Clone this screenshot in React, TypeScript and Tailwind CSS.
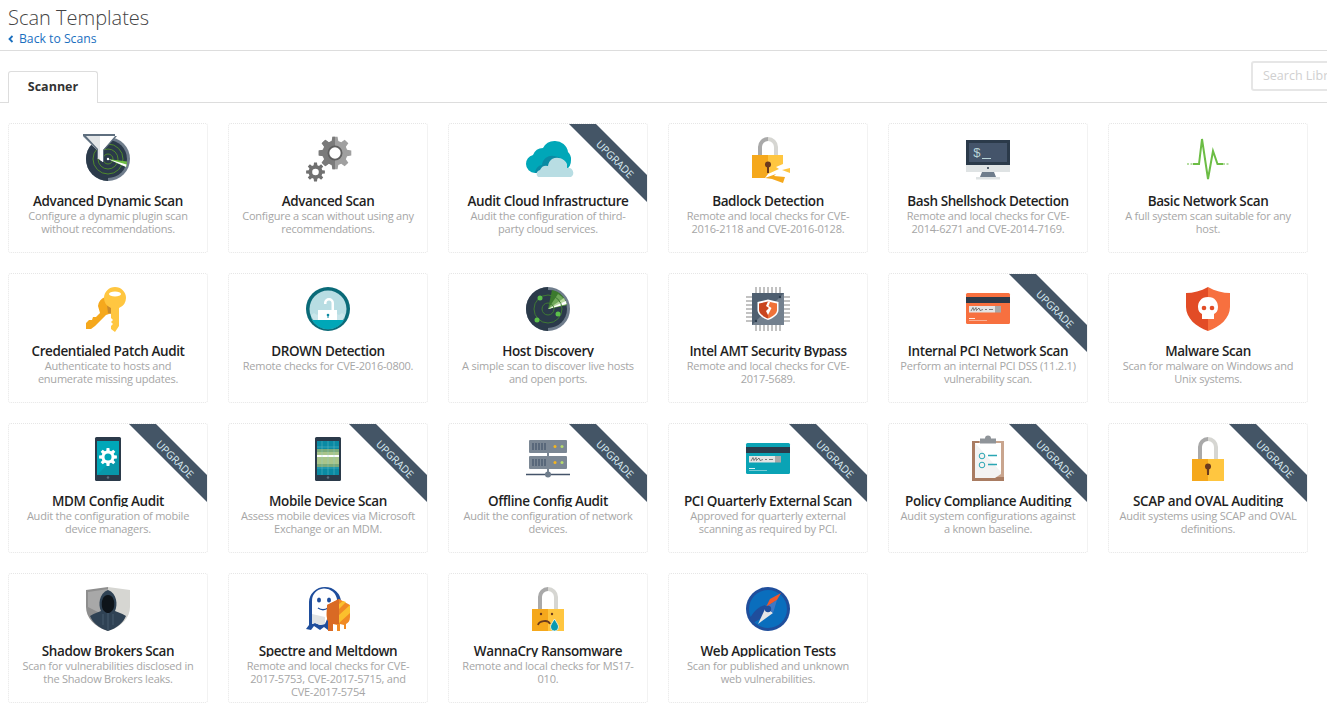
import React from "react";

const gear = (cx: number, cy: number, ro: number, ri: number, n: number) => {
  let d = "";
  const step = (Math.PI * 2) / n;
  for (let i = 0; i < n; i++) {
    const a = i * step - Math.PI / 2;
    const pts: [number, number][] = [
      [ri, a - step * 0.34],
      [ro, a - step * 0.2],
      [ro, a + step * 0.2],
      [ri, a + step * 0.34],
    ];
    pts.forEach(([r, t], j) => {
      d += `${i === 0 && j === 0 ? "M" : "L"}${(cx + r * Math.cos(t)).toFixed(2)} ${(cy + r * Math.sin(t)).toFixed(2)} `;
    });
  }
  return d + "Z";
};

const LockBody = ({ y = 22, h = 22 }: { y?: number; h?: number }) => (
  <>
    <rect x="6" y={y} width="16" height={h} fill="#f5a81c" />
    <rect x="22" y={y} width="16" height={h} fill="#ffc640" />
  </>
);

const Shackle = ({ h = 23 }: { h?: number }) => (
  <>
    <path d={`M12 ${h}V10A10 10 0 0 1 22 0V4A6 6 0 0 0 16 10V${h}Z`} fill="#a9a9a9" />
    <path d={`M32 ${h}V10A10 10 0 0 0 22 0V4A6 6 0 0 1 28 10V${h}Z`} fill="#d6d6d2" />
  </>
);

const CreditCard = ({ c }: { c: string }) => (
  <>
    <rect x="0" y="6" width="44" height="31" rx="1.5" fill={c} />
    <rect x="0" y="10" width="44" height="6" fill="#2b3a4a" />
    <rect x="3" y="19" width="26" height="6.5" fill="#e4e4e4" />
    <path d="M5 24 7 20.5 8 23.5 10 20.5 10.5 23.5 13 21 14 23.5 17 22.5M19 22.5H21M23 22.5H27" stroke="#333" strokeWidth=".6" fill="none" />
    <rect x="29" y="19" width="6" height="6.5" fill="#a8a8a8" />
    <rect x="3" y="31" width="6" height="1" fill="#fff" opacity=".85" />
    <rect x="3" y="33" width="18" height=".8" fill="#fff" opacity=".55" />
  </>
);

const Phone = ({ children }: { children: React.ReactNode }) => (
  <>
    <rect x="9" y="0" width="26" height="44" rx="1.5" fill="#2b3a4a" />
    {children}
    <circle cx="22" cy="40.5" r="1.2" fill="#5f6f7f" />
  </>
);

const icons: Record<string, React.ReactNode> = {
  dynamic: (
    <>
      <circle cx="22" cy="22" r="22" fill="#6f7d8c" />
      <path d="M22 0A22 22 0 0 0 22 44Z" fill="#2b3a4a" />
      <circle cx="22" cy="22" r="19" fill="#2b3a4a" />
      <g fill="none" stroke="#4f8a2d" strokeWidth="1">
        <circle cx="22" cy="22" r="15" />
        <circle cx="22" cy="22" r="10" />
        <circle cx="22" cy="22" r="5" />
      </g>
      <path d="M22 22 41 24.5 40.5 30Z" fill="#6fbe44" />
      <path d="M22 22 40.5 27.5 40 30Z" fill="#fff" />
      <circle cx="22" cy="22" r="1.2" fill="#fff" />
      <path d="M-3-3H29V0L17 13V25L11 21V13L-3 0Z" fill="#e3e6e8" />
      <path d="M14-3H29V0L17 13V25L14 23Z" fill="#fff" />
      <path d="M-3-3H29V-1H-3Z" fill="#5f6f7f" />
      <path d="M-3-1 11 13V21L12 21.8V12L0-1Z" fill="#5f6f7f" />
      <path d="M29-1 17 13V25L18 25V13.5L31-1Z" fill="#5f6f7f" />
    </>
  ),
  gears: (
    <>
      <defs>
        <clipPath id="gear-left">
          <rect x="0" y="-2" width="29" height="36" />
        </clipPath>
      </defs>
      <path d={gear(29, 16, 16.5, 12.5, 8)} fill="#a0a0a0" />
      <path d={gear(29, 16, 16.5, 12.5, 8)} fill="#7a7a7a" clipPath="url(#gear-left)" />
      <circle cx="29" cy="16" r="7.5" fill="#5f5f5f" />
      <circle cx="29" cy="16" r="5.7" fill="#fff" />
      <path d={gear(9.5, 35, 9.5, 7, 8)} fill="#707070" />
      <circle cx="9.5" cy="35" r="3.3" fill="#fff" />
    </>
  ),
  cloud: (
    <>
      <path d="M9 36A9 9 0 0 1 0 27 9 9 0 0 1 7 18 11 11 0 0 1 17 11 13 13 0 0 1 29 4 13 13 0 0 1 42 15 10 10 0 0 1 45 23 12 12 0 0 1 40 33L16 36Z" fill="#00a7b8" />
      <path d="M9 36A8 8 0 0 1 16 28 10 10 0 0 1 28 19 12 12 0 0 1 38 26L30 36Z" fill="#0a8aa3" />
      <path d="M12 40A4 4 0 0 1 14 33 7 7 0 0 1 22 29 10 10 0 0 1 26 22 11 11 0 0 1 41 27V31A5 5 0 0 1 45 40Z" fill="#b8dde3" />
    </>
  ),
  badlock: (
    <>
      <Shackle h={18} />
      <path d="M6 18H22V37L19 41H6Z" fill="#f5a81c" />
      <path d="M22 18H37V27L30 30 33 32 22 37Z" fill="#ffc640" />
      <path d="M36 33 44 31 44 36Z" fill="#ffc640" />
      <path d="M19 41 30 37 28 39 39 40 37 46 26 42Z" fill="#f5a81c" />
      <circle cx="22" cy="27.500" r="3" fill="#6b3a1e" />
      <path d="M21 28H23V36H21Z" fill="#6b3a1e" />
    </>
  ),
  shell: (
    <>
      <rect x="0" y="3" width="44" height="25" fill="#2b3a4a" />
      <rect x="3" y="6" width="38" height="19" fill="#44546a" />
      <rect x="0" y="28" width="44" height="7" fill="#dfe3e4" />
      <circle cx="22" cy="31" r="1" fill="#2b3a4a" />
      <path d="M16 35H28L30 40H14Z" fill="#6f7d8c" />
      <rect x="10" y="40" width="24" height="2.5" fill="#dfe3e4" />
      <text x="7" y="20" fontSize="13" fill="#b8d4d8" fontFamily="Liberation Mono">$</text>
      <rect x="16" y="21" width="9" height="1" fill="#b8d4d8" />
    </>
  ),
  pulse: (
    <>
      <path d="M1 27H7" stroke="#6cbd45" strokeWidth="1" strokeDasharray="2 1.5" fill="none" />
      <path d="M7 27H13L16 2 22 42 27 14 31.5 27H37" stroke="#6cbd45" strokeWidth="2" fill="none" />
      <path d="M37 27H43" stroke="#6cbd45" strokeWidth="1" strokeDasharray="2 1.5" fill="none" />
    </>
  ),
  keys: (
    <>
      <path d="M19 10A11 11 0 0 1 30 21L26 26 20 28 9 39 5 42H0V36L3 33H6L7 30H10L14 26 12 19A11 11 0 0 1 19 10Z" fill="#f5a81c" />
      <path d="M20 10 22 26 26 27 28 20 19 9Z" fill="#c98a2c" />
      <path d="M29 0A11 11 0 0 1 40 11 11 11 0 0 1 33 21V39L29 45 25 42V39L27 37 25 35 27 33 25 31 25 21A11 11 0 0 1 18 11 11 11 0 0 1 29 0Z" fill="#ffc640" />
      <ellipse cx="29" cy="7" rx="6" ry="2.5" fill="#fff" />
    </>
  ),
  drown: (
    <>
      <circle cx="22" cy="22" r="22" fill="#0a6a78" />
      <circle cx="22" cy="22" r="18.5" fill="#b8dde3" />
      <path d="M18 17V16A5 5 0 0 1 28 16V24H25.500V16A2.500 2.500 0 0 0 20.500 16V17Z" fill="#fff" />
      <path d="M12 23H31V35H12Z" fill="#fff" />
      <path d="M5 28 8 26 11 28 12 27V35H31V27L33 28 36 26 39 28V31A18.500 18.500 0 0 1 5 31Z" fill="#e8f4f6" opacity=".35" />
      <path d="M6 33H38A18.500 18.500 0 0 1 6 33Z" fill="#00a7b8" />
      <circle cx="22" cy="28" r="1.300" fill="#0a8aa3" />
      <rect x="21.500" y="28" width="1" height="3" fill="#0a8aa3" />
    </>
  ),
  host: (
    <>
      <circle cx="22" cy="22" r="22" fill="#6f7d8c" />
      <path d="M22 0A22 22 0 0 0 22 44Z" fill="#2b3a4a" />
      <circle cx="22" cy="22" r="19" fill="#2b3a4a" />
      <path d="M22 22 26 3A19 19 0 0 1 41 18Z" fill="#3b7a2d" />
      <path d="M22 22 32 7A19 19 0 0 1 41 18Z" fill="#6fa85a" />
      <path d="M22 22 38 11 40.500 17Z" fill="#b7d8a0" />
      <path d="M22 22 40 14 40.500 17Z" fill="#fff" />
      <g fill="none" stroke="#3f7a34" strokeWidth="1">
        <circle cx="22" cy="22" r="14" />
        <circle cx="22" cy="22" r="6" />
      </g>
      <circle cx="14" cy="11" r="2.500" fill="#5cc04a" />
      <circle cx="32" cy="27" r="2.500" fill="#5cc04a" />
      <circle cx="11" cy="33" r="2.500" fill="#5cc04a" />
    </>
  ),
  chip: (
    <>
      <g fill="#c2c2c2">
        {[9, 13, 17, 21, 25, 29, 33].map((v) => (
          <React.Fragment key={v}>
            <rect x={v} y="0" width="2" height="6" />
            <rect x={v} y="38" width="2" height="6" />
            <rect x="0" y={v} width="6" height="2" />
            <rect x="38" y={v} width="6" height="2" />
          </React.Fragment>
        ))}
      </g>
      <rect x="6" y="6" width="32" height="32" fill="#73808e" />
      <path d="M6 6H38L6 38Z" fill="#4f5f70" />
      <circle cx="34" cy="10" r="1.200" fill="#2b3a4a" />
      <circle cx="10" cy="34" r="1.200" fill="#2b3a4a" />
      <path d="M22 12.500 32.500 15V23C32.500 27 28 31 22 33 16 31 11.500 27 11.500 23V15Z" fill="#fff" />
      <path d="M22 14.500 31 16.500V23C31 26.500 27 29.500 22 31.500Z" fill="#f07238" />
      <path d="M22 14.500 13 16.500V23C13 26.500 17 29.500 22 31.500Z" fill="#c9461f" />
      <path d="M22 14.500 20 19 23 21 20 24 22 28 24 24 25.500 21 22.500 19 24 15Z" fill="#fff" />
    </>
  ),
  card: <CreditCard c="#f7703f" />,
  pcicard: <CreditCard c="#0aa3b5" />,
  skull: (
    <>
      <path d="M22 0C15 4 7 6 0 6V20C0 31 10 40 22 44Z" fill="#e24c26" />
      <path d="M22 0C29 4 37 6 44 6V20C44 31 34 40 22 44Z" fill="#f7703f" />
      <path d="M22 10C15 10 12 15 12 20 12 24 14 26 16 27V32H28V27C30 26 32 24 32 20 32 15 29 10 22 10Z" fill="#fff" />
      <circle cx="18" cy="21" r="2.300" fill="#e24c26" />
      <circle cx="26" cy="21" r="2.300" fill="#e24c26" />
    </>
  ),
  mdm: (
    <Phone>
      <rect x="11" y="4" width="22" height="34" fill="#00a7b8" />
      <path d="M11 38 33 16V38Z" fill="#0c90a3" opacity=".7" />
      <path d={gear(22, 20, 9, 6.500, 8)} fill="#fff" />
      <circle cx="22" cy="20" r="3.500" fill="#00a7b8" />
    </Phone>
  ),
  mobile: (
    <Phone>
      <rect x="11" y="4" width="22" height="34" fill="#0a8aa3" />
      <rect x="11" y="12" width="22" height="18" fill="#7aa97a" />
      <rect x="11" y="15" width="22" height="12" fill="#a8c48a" />
      <rect x="11" y="18" width="22" height="2" fill="#fff" />
      <path d="M16 4V38M22 4V38M28 4V38M11 10H33M11 31H33" stroke="#8fd0d8" strokeWidth=".5" opacity=".7" />
    </Phone>
  ),
  server: (
    <>
      <rect x="3" y="3" width="38" height="13" rx="1" fill="#7b8794" />
      <rect x="3" y="19" width="38" height="13" rx="1" fill="#7b8794" />
      <path d="M22 16V19M22 32V37" stroke="#7b8794" strokeWidth="2" />
      <path d="M0 37.500H44" stroke="#44546a" strokeWidth="1.500" />
      <circle cx="22" cy="37.500" r="3" fill="#6f7d8c" />
      {[6, 22].map((y) => (
        <React.Fragment key={y}>
          <path d={`M7 ${y}v7M10 ${y}v7M13 ${y}v7M16 ${y}v7M19 ${y}v7`} stroke="#44546a" strokeWidth="1.200" />
          <circle cx="29" cy={y + 3.5} r="1.500" fill="#f5b51f" />
          <circle cx="36" cy={y + 3.5} r="1.500" fill="#b7dc6c" />
        </React.Fragment>
      ))}
    </>
  ),
  clip: (
    <>
      <rect x="6" y="4" width="32" height="40" fill="#c9a58e" />
      <path d="M6 4H13V44H6ZM6 40H38V44H6Z" fill="#a97c62" />
      <path d="M9 6H35V37L29 41H9Z" fill="#f3f3f3" />
      <path d="M21 6H35V35L9 6Z" fill="#fff" />
      <path d="M14 3H19A3 3 0 0 1 25 3H30V8H14Z" fill="#8f9499" transform="translate(0 -1.500)" />
      <circle cx="16" cy="19" r="2.800" fill="none" stroke="#2aa6b4" strokeWidth="1" />
      <circle cx="16" cy="28" r="2.800" fill="none" stroke="#2aa6b4" strokeWidth="1" />
      <path d="M22 18.500H31M22 27.500H31" stroke="#2aa6b4" strokeWidth="1.300" />
    </>
  ),
  lock: (
    <>
      <Shackle />
      <LockBody />
      <circle cx="22" cy="29.500" r="3" fill="#6b3a1e" />
      <path d="M20.800 30H23.200L23 38H21Z" fill="#6b3a1e" />
    </>
  ),
  shadow: (
    <>
      <path d="M0 3 22 0V44C8 40 0 30 0 20Z" fill="#8e8e8e" />
      <path d="M44 3 22 0V44C36 40 44 30 44 20Z" fill="#d6d6d2" />
      <path d="M2 5 22 2V30L2 20Z" fill="#a8a8a8" />
      <path d="M22 44C13 41 7 36 4 29 9 26 13 25 15 24 12 18 13 6 22 3 31 6 32 18 29 24 31 25 35 26 40 29 37 36 31 41 22 44Z" fill="#2f4254" />
      <path d="M22 8C17 8 15 14 16 20 17 24 20 26 22 26 24 26 27 24 28 20 29 14 27 8 22 8Z" fill="#0e141a" />
      <path d="M22 26V43M17 27V38M27 27V38" stroke="#52667a" strokeWidth=".7" />
    </>
  ),
  spectre: (
    <>
      <path d="M0 42 3 38V15A16 15 0 0 1 35 15V20L25 25 22 43 18 40 14 43 8 39 5 43Z" fill="#1f4e9c" />
      <path d="M6 37V15A12 12 0 0 1 31 13V20L24 25 19 37 14 38 9 36Z" fill="#fff" />
      <path d="M6 27 19 30 19 37 14 38 9 36 6 37Z" fill="#e0e3e4" />
      <ellipse cx="13" cy="13" rx="2" ry="2.500" fill="#1f4e9c" />
      <ellipse cx="23" cy="13" rx="2" ry="2.500" fill="#1f4e9c" />
      <path d="M12 21C15 23 19 23 22 21" stroke="#1f4e9c" strokeWidth="1.500" fill="none" />
      <path d="M21 18 33 12 44 18V30C44 34 42 36 40 37V42H38V38L34 37V44H31V38L27 37V44H22V34C20 30 21 25 21 18Z" fill="#f08a24" />
      <path d="M21 18 33 12V37L27 37V44H22V34C20 30 21 25 21 18Z" fill="#d96a24" />
      <path d="M33 28 44 18V26L33 36ZM37 14 40 15 33 22V17Z" fill="#fbc02d" />
    </>
  ),
  wanna: (
    <>
      <Shackle />
      <LockBody />
      <circle cx="15" cy="27" r="1.200" fill="#6b3a1e" />
      <circle cx="26" cy="27" r="1.200" fill="#6b3a1e" />
      <path d="M12 38C13 34 22 32 24 37" stroke="#6b3a1e" strokeWidth="1.800" fill="none" />
      <path d="M28.500 32C26 36 24.500 38 24.500 40A4 4 0 0 0 32.500 40C32.500 38 31 36 28.500 32Z" fill="#0a9ab0" stroke="#fff" strokeWidth=".7" />
    </>
  ),
  compass: (
    <>
      <circle cx="22" cy="22" r="22" fill="#1f4e9c" />
      <circle cx="22" cy="22" r="19" fill="#0a6ebd" />
      <path d="M4 32C6 26 12 20 19 18L24 25 14 32 7 36Z" fill="#1f4e9c" />
      <path d="M12 37 20 20 27 26Z" fill="#e6e6e6" />
      <path d="M20 20 31 13 35 6 24 12Z" fill="#f0592a" />
      <path d="M27 26 31 13 20 20Z" fill="#3f78c4" />
      <circle cx="22" cy="22" r="3.200" fill="#1f4e9c" />
    </>
  ),
};

type Item = { icon: string; title: string; lines: string[]; up?: boolean };

const items: Item[] = [
  { icon: "dynamic", title: "Advanced Dynamic Scan", lines: ["Configure a dynamic plugin scan", "without recommendations."] },
  { icon: "gears", title: "Advanced Scan", lines: ["Configure a scan without using any", "recommendations."] },
  { icon: "cloud", title: "Audit Cloud Infrastructure", lines: ["Audit the configuration of third-", "party cloud services."], up: true },
  { icon: "badlock", title: "Badlock Detection", lines: ["Remote and local checks for CVE-", "2016-2118 and CVE-2016-0128."] },
  { icon: "shell", title: "Bash Shellshock Detection", lines: ["Remote and local checks for CVE-", "2014-6271 and CVE-2014-7169."] },
  { icon: "pulse", title: "Basic Network Scan", lines: ["A full system scan suitable for any", "host."] },
  { icon: "keys", title: "Credentialed Patch Audit", lines: ["Authenticate to hosts and", "enumerate missing updates."] },
  { icon: "drown", title: "DROWN Detection", lines: ["Remote checks for CVE-2016-0800."] },
  { icon: "host", title: "Host Discovery", lines: ["A simple scan to discover live hosts", "and open ports."] },
  { icon: "chip", title: "Intel AMT Security Bypass", lines: ["Remote and local checks for CVE-", "2017-5689."] },
  { icon: "card", title: "Internal PCI Network Scan", lines: ["Perform an internal PCI DSS (11.2.1)", "vulnerability scan."], up: true },
  { icon: "skull", title: "Malware Scan", lines: ["Scan for malware on Windows and", "Unix systems."] },
  { icon: "mdm", title: "MDM Config Audit", lines: ["Audit the configuration of mobile", "device managers."], up: true },
  { icon: "mobile", title: "Mobile Device Scan", lines: ["Assess mobile devices via Microsoft", "Exchange or an MDM."], up: true },
  { icon: "server", title: "Offline Config Audit", lines: ["Audit the configuration of network", "devices."], up: true },
  { icon: "pcicard", title: "PCI Quarterly External Scan", lines: ["Approved for quarterly external", "scanning as required by PCI."], up: true },
  { icon: "clip", title: "Policy Compliance Auditing", lines: ["Audit system configurations against", "a known baseline."], up: true },
  { icon: "lock", title: "SCAP and OVAL Auditing", lines: ["Audit systems using SCAP and OVAL", "definitions."], up: true },
  { icon: "shadow", title: "Shadow Brokers Scan", lines: ["Scan for vulnerabilities disclosed in", "the Shadow Brokers leaks."] },
  { icon: "spectre", title: "Spectre and Meltdown", lines: ["Remote and local checks for CVE-", "2017-5753, CVE-2017-5715, and", "CVE-2017-5754"] },
  { icon: "wanna", title: "WannaCry Ransomware", lines: ["Remote and local checks for MS17-", "010."] },
  { icon: "compass", title: "Web Application Tests", lines: ["Scan for published and unknown", "web vulnerabilities."] },
];

const Card = ({ item }: { item: Item }) => (
  <div className="relative h-[130px] w-[200px] overflow-hidden rounded-[3px] border border-dotted border-[#e6e6e6] bg-white pt-[13px] text-center">
    <svg viewBox="0 0 44 44" className="mx-auto block h-[44px] w-[44px] overflow-visible">
      {icons[item.icon]}
    </svg>
    <div className="mt-[10px] h-[16px] overflow-hidden whitespace-nowrap text-[13.5px] leading-[21px] font-semibold tracking-[-0.4px] text-[#1f1f1f]">
      {item.title}
    </div>
    <div className="mt-[2px] text-[11px] leading-[13px] tracking-[-0.22px] whitespace-nowrap text-[#a6a6a6]">
      {item.lines.map((l) => (
        <div key={l}>{l}</div>
      ))}
    </div>
    {item.up && (
      <div className="absolute top-0 right-0 h-[79px] w-[79px] bg-[#445566] [clip-path:polygon(1px_0,28px_0,79px_51px,79px_78px)]">
        <span className="absolute top-[28px] left-[19px] block w-[56px] rotate-45 text-center text-[10.5px] leading-[14px] text-[#dceef5]">
          UPGRADE
        </span>
      </div>
    )}
  </div>
);

export default function App() {
  return (
    <div className="h-[718px] w-[1327px] overflow-hidden bg-white font-['Open_Sans','Noto_Sans',sans-serif]">
      <header className="h-[51px] border-b border-[#dddddd] px-2">
        <h1 className="pt-[3px] text-[20px] leading-[29px] font-light text-[#444444]">Scan Templates</h1>
        <a className="flex items-center gap-[5px] text-[12.2px] leading-[14px] text-[#1a6fbf]">
          <svg viewBox="0 0 6 8" className="h-[8px] w-[6px]">
            <path d="M4.500 1 1.500 4 4.500 7" fill="none" stroke="#1a6fbf" strokeWidth="1.800" />
          </svg>
          Back to Scans
        </a>
      </header>
      <div className="relative mt-5 flex h-[32px] items-end border-b border-[#dddddd] pl-2">
        <div className="-mb-px flex h-[32px] w-[90px] items-center justify-center rounded-t-[3px] border border-b-0 border-[#dddddd] bg-white text-[12.5px] font-bold text-[#333333]">
          Scanner
        </div>
        <div className="absolute top-[-10px] left-[1251px] flex h-[30px] w-[200px] items-center rounded-[3px] border-2 border-[#e6e6e6] bg-white pl-[10px] text-[12.5px] leading-[30px] text-[#d0d0d0]">
          Search Library
        </div>
      </div>
      <div className="mt-5 grid grid-cols-[repeat(6,200px)] gap-5 pl-2">
        {items.map((it) => (
          <Card key={it.title} item={it} />
        ))}
      </div>
    </div>
  );
}
